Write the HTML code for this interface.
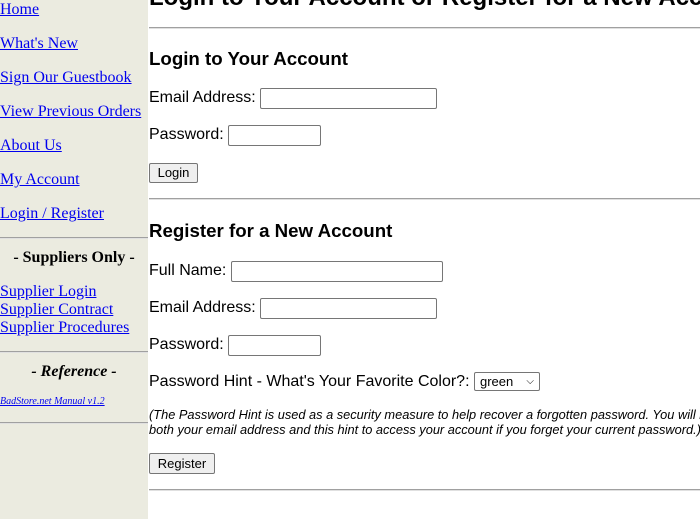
<!DOCTYPE html>
<html><head><meta charset="utf-8"><style>
html,body{margin:0;width:700px;height:519px;overflow:hidden;}
body{background:#fff;position:relative;font-family:"Liberation Sans",sans-serif;}
.side{position:absolute;left:0;top:0;width:148px;height:519px;background:#ebebe0;}
.a{position:absolute;font-family:"Liberation Serif",serif;font-size:16px;color:#0000ee;text-decoration:underline;white-space:nowrap;line-height:18px;}
.hr{position:absolute;height:0;border-top:1px solid #a0a0a0;border-bottom:1px solid #e0e0e0;}
.t{position:absolute;white-space:nowrap;line-height:18px;}
.l{position:absolute;font-size:16px;color:#000;white-space:nowrap;line-height:18px;}
.in{position:absolute;border:1px solid #767676;border-radius:2px;background:#fff;box-sizing:border-box;height:21px;}
.btn{position:absolute;border:1px solid #767676;border-radius:2px;background:#efefef;font-size:13px;text-align:center;box-sizing:border-box;line-height:17px;}
h2{position:absolute;margin:0;font-size:18.7px;font-weight:bold;white-space:nowrap;line-height:22px;}
.main{position:absolute;left:0;top:0;width:700px;height:519px;overflow:hidden;}
</style></head><body>
<div class="side"></div>
<div class="a" style="left:0;top:1px">Home</div>
<div class="a" style="left:0;top:35px">What's New</div>
<div class="a" style="left:0;top:69px">Sign Our Guestbook</div>
<div class="a" style="left:0;top:103px">View Previous Orders</div>
<div class="a" style="left:0;top:137px">About Us</div>
<div class="a" style="left:0;top:171px">My Account</div>
<div class="a" style="left:0;top:205px">Login / Register</div>
<div class="hr" style="left:0;width:148px;top:237px"></div>
<div class="t" style="left:0;width:148px;text-align:center;top:249px;font-family:'Liberation Serif',serif;font-weight:bold;font-size:16px">- Suppliers Only -</div>
<div class="a" style="left:0;top:283px">Supplier Login</div>
<div class="a" style="left:0;top:301px">Supplier Contract</div>
<div class="a" style="left:0;top:319px">Supplier Procedures</div>
<div class="hr" style="left:0;width:148px;top:351px"></div>
<div class="t" style="left:0;width:148px;text-align:center;top:363px;font-family:'Liberation Serif',serif;font-weight:bold;font-style:italic;font-size:16px">- Reference -</div>
<div class="a" style="left:0;top:396px;font-size:10px;font-style:italic;line-height:12px">BadStore.net Manual v1.2</div>
<div class="hr" style="left:0;width:148px;top:422px"></div>

<div class="main">
<div class="t" style="left:149px;top:-16px;font-size:24px;font-weight:bold;line-height:28px">Login to Your Account or Register for a New Account</div>
<div class="hr" style="left:149px;width:551px;top:27px"></div>
<h2 style="left:149px;top:48px">Login to Your Account</h2>
<div class="l" style="left:149px;top:89px">Email Address:</div>
<div class="in" style="left:260px;top:88px;width:177px"></div>
<div class="l" style="left:149px;top:126px">Password:</div>
<div class="in" style="left:228px;top:125px;width:93px"></div>
<div class="btn" style="left:149px;top:163px;width:49px;height:20px">Login</div>
<div class="hr" style="left:149px;width:551px;top:198px"></div>
<h2 style="left:149px;top:220px">Register for a New Account</h2>
<div class="l" style="left:149px;top:262px">Full Name:</div>
<div class="in" style="left:231px;top:261px;width:212px"></div>
<div class="l" style="left:149px;top:299px">Email Address:</div>
<div class="in" style="left:260px;top:298px;width:177px"></div>
<div class="l" style="left:149px;top:336px">Password:</div>
<div class="in" style="left:228px;top:335px;width:93px"></div>
<div class="l" style="left:149px;top:373px">Password Hint - What's Your Favorite Color?:</div>
<div class="in" style="left:474px;top:372px;width:66px;height:19px;font-size:13px;line-height:17px;padding-left:5px">green<span style="position:absolute;right:5px;top:0;font-size:10px">&#x2335;</span></div>
<div class="t" style="left:149px;top:407px;font-size:12.8px;font-style:italic;line-height:15px">(The Password Hint is used as a security measure to help recover a forgotten password. You will need<br>both your email address and this hint to access your account if you forget your current password.)</div>
<div class="btn" style="left:149px;top:453px;width:66px;height:21px;line-height:19px">Register</div>
<div class="hr" style="left:149px;width:551px;top:489px"></div>
</div>
</body></html>
